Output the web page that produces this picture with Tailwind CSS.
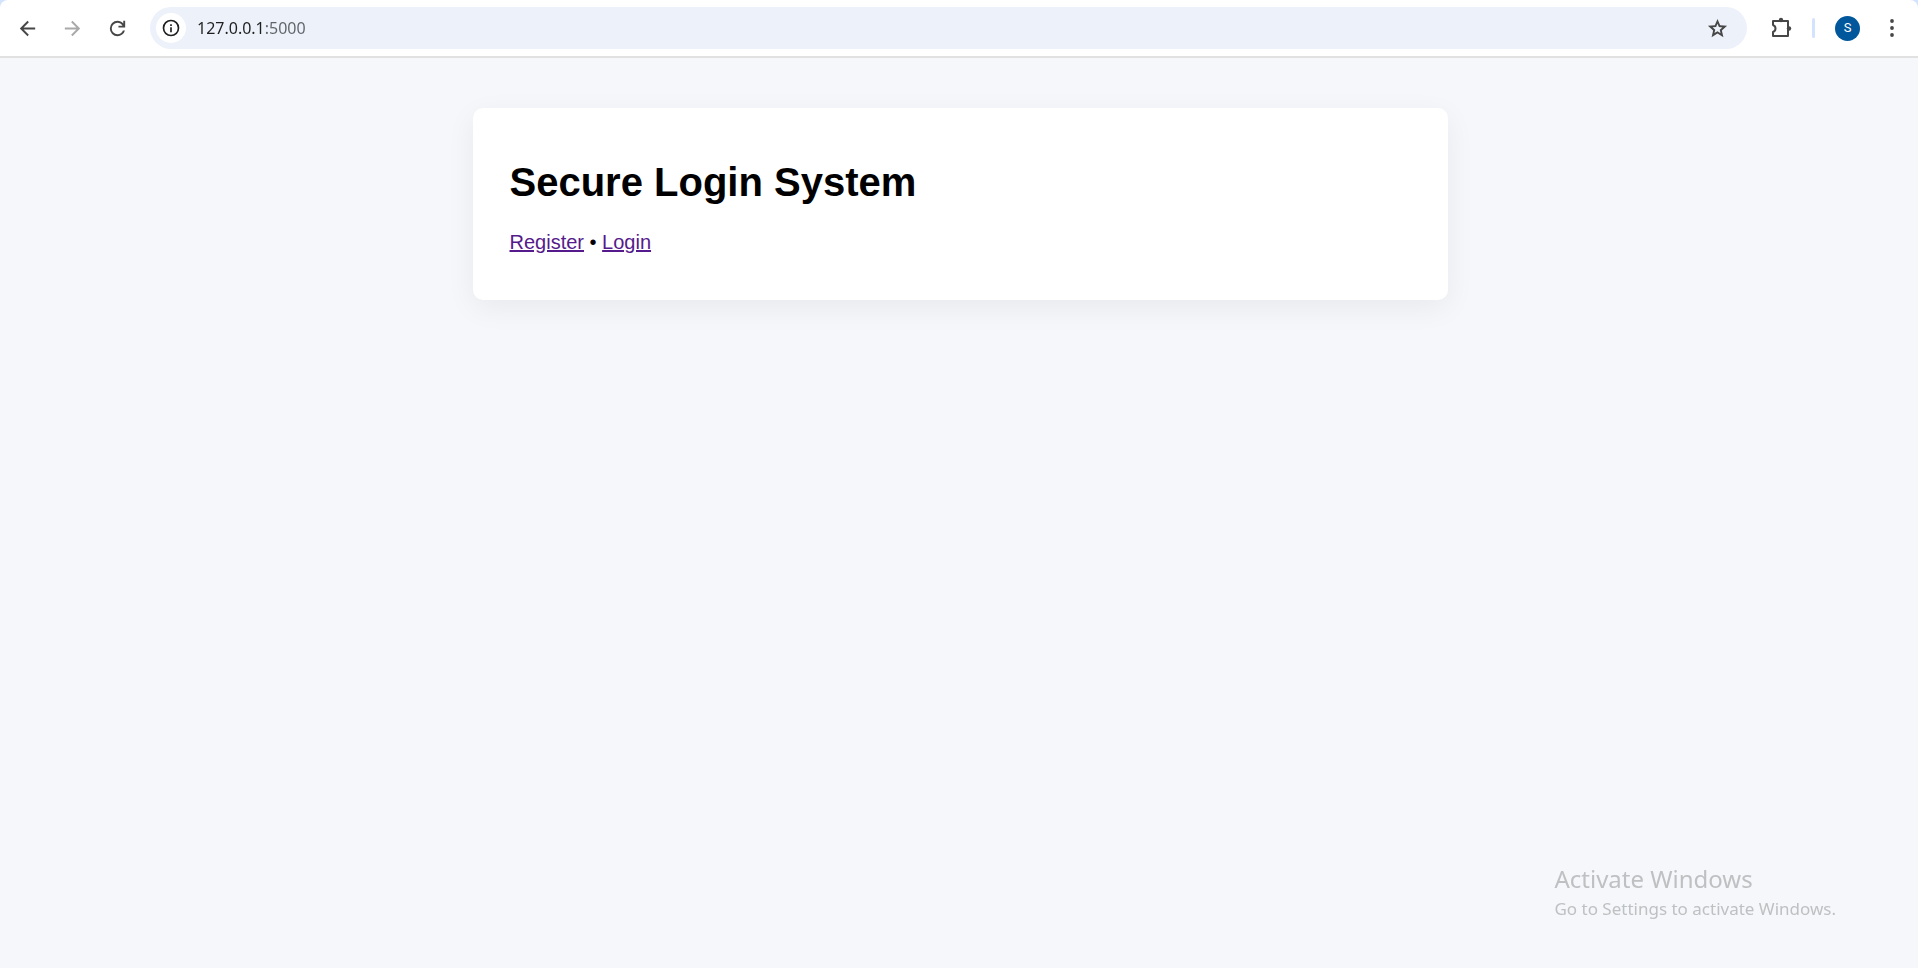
<!DOCTYPE html>
<html lang="en">
<head>
<meta charset="utf-8">
<title>Secure Login System</title>
<script src="https://cdn.jsdelivr.net/npm/@tailwindcss/browser@4"></script>
</head>
<body class="flex min-h-screen flex-col bg-[#f5f7fb] font-['Liberation_Sans',sans-serif] text-black">
<header class="bg-[#d3e3fd]">
  <div class="flex h-[58px] items-center rounded-t-lg border-b-2 border-[#e1e1e1] bg-white pr-2 pl-[9px]">
    <nav class="flex gap-2" aria-label="Browser navigation">
      <button type="button" aria-label="Back" class="grid size-[37px] place-items-center text-[#474747]">
        <svg class="size-[23px]" viewBox="0 0 24 24" fill="none" stroke="currentColor" stroke-width="2"><path d="M20 12H5.500M12.700 4.700 5.400 12l7.300 7.300"/></svg>
      </button>
      <button type="button" aria-label="Forward" class="grid size-[37px] place-items-center text-[#a9a9a9]">
        <svg class="size-[23px]" viewBox="0 0 24 24" fill="none" stroke="currentColor" stroke-width="2"><path d="M4 12h14.500M11.300 4.700 18.600 12l-7.300 7.300"/></svg>
      </button>
      <button type="button" aria-label="Reload" class="grid size-[37px] place-items-center text-[#474747]">
        <svg class="size-[23px]" viewBox="0 0 24 24" fill="currentColor"><path d="M12 20q-3.350 0-5.675-2.325T4 12t2.325-5.675T12 4q1.725 0 3.300.712T18 6.750V4h2v7h-7V9h4.200q-.8-1.400-2.187-2.200T12 6Q9.500 6 7.750 7.750T6 12t1.750 4.250T12 18q1.925 0 3.475-1.100T17.650 14h2.100q-.7 2.650-2.850 4.325T12 20"/></svg>
      </button>
    </nav>
    <div class="ml-[14px] flex h-[42px] min-w-0 flex-1 items-center rounded-full bg-[#ecf1fa] pr-[18px] pl-[6px]">
      <button type="button" aria-label="Site information" class="grid size-[30px] shrink-0 place-items-center rounded-full bg-white text-[#1f1f1f]">
        <svg class="size-5" viewBox="0 0 24 24" fill="none" stroke="currentColor" stroke-width="2"><circle cx="12" cy="12" r="9"/><path d="M12 11v6M12 7.500v2"/></svg>
      </button>
      <input type="text" aria-label="Address" value="127.0.0.1:5000" class="ml-[11px] min-w-0 flex-1 bg-[linear-gradient(90deg,#1f1f1f_68px,#5f6368_68px)] bg-clip-text font-['Noto_Sans',sans-serif] text-base text-transparent caret-black outline-none">
      <button type="button" aria-label="Bookmark this page" class="grid size-6 shrink-0 place-items-center text-[#474747]">
        <svg class="size-[23px]" viewBox="0 0 24 24" fill="currentColor"><path d="m8.850 16.825 3.150-1.900 3.150 1.925-.825-3.600 2.775-2.400-3.650-.325-1.450-3.400-1.450 3.375-3.650.325 2.775 2.425zM5.825 21l1.625-7.025L2 9.250l7.200-.625L12 2l2.800 6.625 7.200.625-5.450 4.725L18.175 21 12 17.275z"/></svg>
      </button>
    </div>
    <button type="button" aria-label="Extensions" class="ml-[22px] grid size-6 place-items-center text-[#474747]">
      <svg class="size-6" viewBox="0 0 24 24" fill="none" stroke="currentColor" stroke-width="2" stroke-linejoin="round"><path d="M4 5h15v15H4v-4q2.500-1 2.500-3.500T4 9z"/><circle cx="12" cy="4" r="2.200" fill="currentColor" stroke="none"/><circle cx="20" cy="12.500" r="2.200" fill="currentColor" stroke="none"/></svg>
    </button>
    <span class="ml-[19px] h-5 w-[3px] rounded-full bg-[#d3e3fd]"></span>
    <button type="button" aria-label="Profile" class="ml-5 grid size-[25px] place-items-center rounded-full bg-[#00579b] font-['Roboto',sans-serif] text-[13px] text-white">S</button>
    <button type="button" aria-label="Menu" class="ml-[14px] grid h-9 w-[36px] place-items-center text-[#474747]">
      <svg class="size-6" viewBox="0 0 24 24" fill="currentColor"><circle cx="12" cy="5" r="1.900"/><circle cx="12" cy="12" r="1.900"/><circle cx="12" cy="19" r="1.900"/></svg>
    </button>
  </div>
</header>
<main class="flex-1 pt-[50px] pr-6 pl-[26px]">
  <section class="mx-auto max-w-[975px] rounded-[10px] bg-white px-[37px] pt-[51px] pb-[46px] shadow-[0_8px_30px_rgba(0,0,0,0.06)]">
    <h1 class="text-[40px] leading-[46px] font-bold">Secure Login System</h1>
    <p class="mt-[26px] text-xl leading-[23px]"><a href="#register" class="text-[#551a8b] underline">Register</a> • <a href="#login" class="text-[#551a8b] underline">Login</a></p>
  </section>
</main>
<aside class="fixed right-[82px] bottom-[45px] font-['Noto_Sans',sans-serif] text-[#bfc0c2]">
  <p class="text-2xl leading-8">Activate Windows</p>
  <p class="text-[17px] leading-7">Go to Settings to activate Windows.</p>
</aside>
</body>
</html>
